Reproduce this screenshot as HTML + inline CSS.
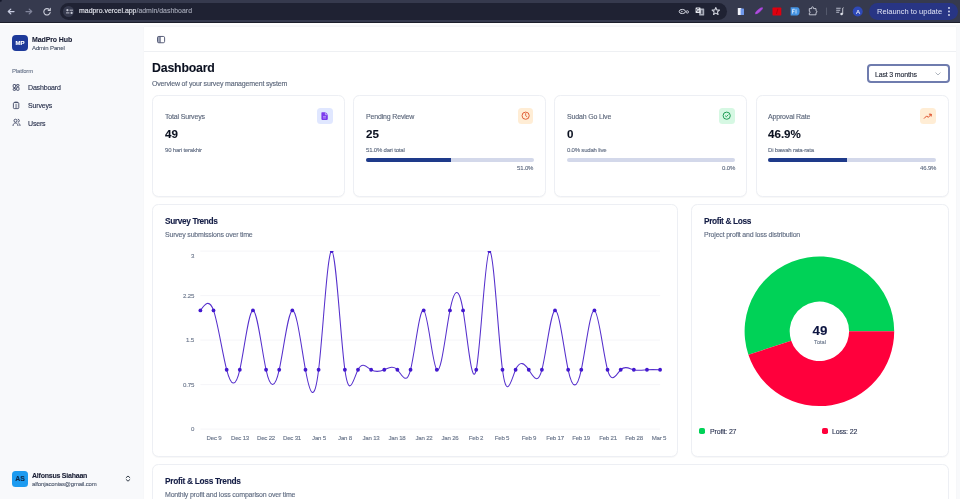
<!DOCTYPE html>
<html><head><meta charset="utf-8"><style>
html,body{margin:0;padding:0;width:960px;height:499px;overflow:hidden;background:#fff;}
body{position:relative;font-family:"Liberation Sans",sans-serif;}
.t{position:absolute;line-height:1;white-space:nowrap;will-change:transform;}
</style></head><body>
<div style="position:absolute;left:0px;top:0px;width:960px;height:23px;background:#363a4e;"></div>
<div style="position:absolute;left:0px;top:0px;width:3px;height:3px;background:radial-gradient(circle at 0 0,#15182a 0,#15182a 1.2px,rgba(21,24,42,0) 2.6px);"></div>
<div style="position:absolute;left:0px;top:22px;width:960px;height:1px;background:#1c1e2b;"></div>
<div style="position:absolute;left:60px;top:3px;width:667px;height:17px;background:#1f2233;border-radius:9px;"></div>
<svg style="position:absolute;left:0;top:0" width="60" height="23" viewBox="0 0 60 23">
<g fill="none" stroke-linecap="round" stroke-linejoin="round" stroke-width="1.1">
<path d="M14 11.5H8.4M10.8 9.1L8.3 11.5L10.8 13.9" stroke="#c8cce0" stroke-width="1.25"/>
<path d="M26 11.5H31.6M29.2 9.1L31.7 11.5L29.2 13.9" stroke="#80849a" stroke-width="1.25"/>
<path d="M50.2 12.2a3.2 3.2 0 1 1-0.9-2.6" stroke="#c9ccd8"/>
<path d="M50.3 8.4v2.1h-2.1" stroke="#c9ccd8"/>
</g></svg>
<div style="position:absolute;left:63.2px;top:5.9px;width:11.2px;height:11.2px;background:#363a4e;border-radius:50%;"></div>
<svg style="position:absolute;left:63px;top:5px" width="13" height="13" viewBox="0 0 13 13">
<g stroke="#c9ccd8" stroke-width="0.9" fill="none" stroke-linecap="round">
<path d="M7 5.2h2.6M3.4 7.9h2.6"/></g><g fill="#c9ccd8"><circle cx="4.4" cy="5.2" r="1.1"/><circle cx="8.6" cy="7.9" r="1.1"/></g></svg>
<div class="t" style="left:79.00px;top:8.42px;font-size:6.95px;color:#e4e6ee;font-weight:400;-webkit-text-stroke:0.12px #e4e6ee;">madpro.vercel.app<span style="color:#a3a7b6;-webkit-text-stroke:0.12px #a3a7b6">/admin/dashboard</span></div>
<svg style="position:absolute;left:676px;top:4px" width="50" height="15" viewBox="0 0 50 15">
<g stroke="#d2d5df" fill="none">
<ellipse cx="6.3" cy="7.5" rx="3.1" ry="2.1" stroke-width="1"/><circle cx="5.9" cy="7.5" r=".7" fill="#d2d5df" stroke="none"/><circle cx="11.3" cy="7.9" r="1.2" stroke-width=".9"/>
</g>
<rect x="23.2" y="4.6" width="5" height="6.9" rx=".5" fill="#a7abb8"/><rect x="25.4" y="6.2" width="1" height="3.8" fill="#1f2233"/>
<rect x="19.6" y="3.4" width="4.9" height="5.6" rx=".5" fill="#e6e8ef"/><path d="M23 4.8a1.5 1.5 0 1 0 .2 2.1h-1.2" stroke="#1f2233" stroke-width=".6" fill="none"/>
<path d="M39.80,3.45 L40.83,5.93 L43.51,6.14 L41.46,7.89 L42.09,10.51 L39.80,9.10 L37.51,10.51 L38.14,7.89 L36.09,6.14 L38.77,5.93Z" stroke="#d2d5df" stroke-width="1.05" fill="none" stroke-linejoin="round"/>
</svg>
<svg style="position:absolute;left:730px;top:3px" width="230" height="18" viewBox="0 0 230 18">
<rect x="7.8" y="4.9" width="3.6" height="7.2" rx=".6" fill="#f2f4fb"/><rect x="10.6" y="5.6" width="3.4" height="6.5" rx=".4" fill="#6f98ec"/>
<ellipse cx="29" cy="7.75" rx="4.9" ry="1.5" transform="rotate(-40 29 7.75)" fill="#a43fd6"/><path d="M26 10.2l5.8-4.9" stroke="#d9a8f0" stroke-width=".5" stroke-dasharray=".8 .7"/>
<rect x="42.5" y="4.6" width="8.8" height="7.8" rx=".6" fill="#e0000f"/><path d="M46.4 11l1.5-5.2" stroke="#a0000a" stroke-width=".7"/>
<path d="M60.6 4.3h6.6a2.4 4 0 0 1 0 8.1h-6.6z" fill="#4493e3"/><path d="M62.6 6.3h2.2M62.6 6.3v4.3M62.6 8.3h1.8M66 6.3v4.3" stroke="#e9f3ff" stroke-width=".8"/>
<path d="M79.3 5.6h2.3v-.9a.9.9 0 0 1 1.8 0v.9h2.6v2.2a.9.9 0 0 1 0 1.8v2.2h-6.7v-1.7a.9.9 0 0 0 0-1.8z" stroke="#cdd0dc" stroke-width=".9" fill="none" stroke-linejoin="round"/>
<rect x="96" y="4.6" width=".6" height="7.5" fill="#6a6e80"/>
<path d="M106.2 5.3h4.5M106.2 7.3h4M106.2 9.3h3" stroke="#b8bccb" stroke-width="1.1"/><circle cx="111.6" cy="11" r="1.3" fill="#dfe2ea"/><path d="M112.7 11V5.2l.9-.5" stroke="#dfe2ea" stroke-width=".8" fill="none"/>
<circle cx="127.7" cy="8.5" r="5" fill="#2e49b8"/>
</svg>
<div class="t" style="left:857.80px;transform:translateX(-50%);transform-origin:50% 0;top:8.85px;font-size:6.2px;color:#e6e9f5;font-weight:400;-webkit-text-stroke:0.12px #e6e9f5;">A</div>
<div style="position:absolute;left:869px;top:3px;width:89px;height:17px;background:#283584;border-radius:9px;"></div>
<div class="t" style="left:876.70px;top:7.95px;font-size:7.5px;color:#dfe3f5;font-weight:400;-webkit-text-stroke:0.12px #dfe3f5;-webkit-text-stroke:0;">Relaunch to update</div>
<svg style="position:absolute;left:946px;top:6px" width="6" height="12" viewBox="0 0 6 12"><g fill="#dfe3f5"><circle cx="3" cy="2" r=".9"/><circle cx="3" cy="5.5" r=".9"/><circle cx="3" cy="9" r=".9"/></g></svg>
<div style="position:absolute;left:0px;top:25px;width:960px;height:474px;background:#f8f9fb;"></div>
<div style="position:absolute;left:144px;top:27px;width:812px;height:472px;background:#ffffff;box-shadow:0 0 1px rgba(0,0,0,0.06);"></div>
<div style="position:absolute;left:144px;top:50.5px;width:812px;height:1px;background:#eef0f3;"></div>
<div style="position:absolute;left:12px;top:35.4px;width:16px;height:15.6px;background:#1e3a9a;border-radius:4px;"></div>
<div class="t" style="left:20.00px;transform:translateX(-50%);transform-origin:50% 0;top:39.92px;font-size:6.0px;color:#ffffff;font-weight:700;-webkit-text-stroke:0.1px #ffffff;">MP</div>
<div class="t" style="left:32.10px;top:35.77px;font-size:7.0px;color:#1a1f35;font-weight:700;-webkit-text-stroke:0.1px #1a1f35;letter-spacing:-0.112px;">MadPro Hub</div>
<div class="t" style="left:32.10px;top:44.82px;font-size:6.0px;color:#475266;font-weight:400;-webkit-text-stroke:0.12px #475266;letter-spacing:-0.112px;">Admin Panel</div>
<div class="t" style="left:11.90px;top:68.12px;font-size:6.0px;color:#6b778c;font-weight:400;-webkit-text-stroke:0.12px #6b778c;letter-spacing:-0.168px;">Platform</div>
<svg style="position:absolute;left:11px;top:82px" width="10" height="48" viewBox="0 0 10 48">
<g fill="none" stroke="#353d5c" stroke-width="0.85" stroke-linejoin="round">
<rect x="2.2" y="2.5" width="2.4" height="3" rx=".5"/><rect x="5.6" y="2.5" width="2.4" height="1.8" rx=".5"/>
<rect x="5.6" y="5.3" width="2.4" height="3" rx=".5"/><rect x="2.2" y="6.5" width="2.4" height="1.8" rx=".5"/>
<rect x="2.4" y="20.6" width="5.4" height="6" rx=".9"/><path d="M3.6 20.6v-.5h3v.5M4.2 23h2M4.2 25h2"/>
<circle cx="4.5" cy="38.7" r="1.5"/><path d="M2 44c0-2 1.2-3 2.5-3s2.5 1 2.5 3M6.8 37.2a1.5 1.5 0 0 1 0 3M7.6 41.2c.9.3 1.4 1.2 1.4 2.8"/>
</g></svg>
<div class="t" style="left:28.00px;top:84.37px;font-size:7.0px;color:#262e4a;font-weight:400;-webkit-text-stroke:0.12px #262e4a;letter-spacing:-0.168px;">Dashboard</div>
<div class="t" style="left:28.00px;top:102.17px;font-size:7.0px;color:#262e4a;font-weight:400;-webkit-text-stroke:0.12px #262e4a;letter-spacing:-0.168px;">Surveys</div>
<div class="t" style="left:28.00px;top:120.37px;font-size:7.0px;color:#262e4a;font-weight:400;-webkit-text-stroke:0.12px #262e4a;letter-spacing:-0.168px;">Users</div>
<div style="position:absolute;left:11.8px;top:471.3px;width:16px;height:16px;background:#1d9bf0;border-radius:3.5px;"></div>
<div class="t" style="left:20.00px;transform:translateX(-50%);transform-origin:50% 0;top:475.76px;font-size:6.9px;color:#0f2a4a;font-weight:700;-webkit-text-stroke:0.1px #0f2a4a;">AS</div>
<div class="t" style="left:32.40px;top:471.77px;font-size:7.0px;color:#1a1f35;font-weight:700;-webkit-text-stroke:0.1px #1a1f35;letter-spacing:-0.224px;">Alfonsus Siahaan</div>
<div class="t" style="left:32.40px;top:480.92px;font-size:6.0px;color:#4f5a6e;font-weight:400;-webkit-text-stroke:0.12px #4f5a6e;letter-spacing:-0.168px;">alfonjaconias@gmail.com</div>
<svg style="position:absolute;left:124px;top:474px" width="8" height="9" viewBox="0 0 8 9"><path d="M2.2 3.6l1.8-1.6 1.8 1.6M2.2 5.6l1.8 1.6 1.8-1.6" fill="none" stroke="#1f2937" stroke-width=".9" stroke-linecap="round" stroke-linejoin="round"/></svg>
<svg style="position:absolute;left:156px;top:35px" width="10" height="9" viewBox="0 0 10 9"><rect x="1.6" y="1.5" width="2.6" height="6" fill="#a3a8bb"/><rect x="1.5" y="1.45" width="7.1" height="6.3" rx="1.3" fill="none" stroke="#474e6b" stroke-width=".9"/><path d="M4.2 1.45v6.3" stroke="#474e6b" stroke-width=".8"/></svg>
<div class="t" style="left:152.00px;top:61.99px;font-size:12.3px;color:#0b1120;font-weight:700;-webkit-text-stroke:0.1px #0b1120;letter-spacing:-0.17px;">Dashboard</div>
<div class="t" style="left:152.30px;top:80.17px;font-size:7.0px;color:#5a6579;font-weight:400;-webkit-text-stroke:0.12px #5a6579;letter-spacing:-0.168px;">Overview of your survey management system</div>
<div style="position:absolute;left:867.3px;top:63.6px;width:82.3px;height:19.9px;box-sizing:border-box;border:2.2px solid #6f7cae;border-radius:4px;background:#fff;"></div>
<div class="t" style="left:874.90px;top:71.07px;font-size:7.0px;color:#1d2333;font-weight:400;-webkit-text-stroke:0.12px #1d2333;letter-spacing:-0.168px;">Last 3 months</div>
<svg style="position:absolute;left:934px;top:71px" width="8" height="6" viewBox="0 0 8 6"><path d="M1.5 1.5l2.5 2.5 2.5-2.5" fill="none" stroke="#9ca3af" stroke-width=".8"/></svg>
<div style="position:absolute;left:152.2px;top:95.4px;width:193px;height:101.2px;box-sizing:border-box;border:1px solid #edeff4;border-radius:6.5px;background:#fff;box-shadow:0 0.5px 1px rgba(0,0,0,.03);"></div>
<div style="position:absolute;left:353.0px;top:95.4px;width:193px;height:101.2px;box-sizing:border-box;border:1px solid #edeff4;border-radius:6.5px;background:#fff;box-shadow:0 0.5px 1px rgba(0,0,0,.03);"></div>
<div style="position:absolute;left:554.2px;top:95.4px;width:193px;height:101.2px;box-sizing:border-box;border:1px solid #edeff4;border-radius:6.5px;background:#fff;box-shadow:0 0.5px 1px rgba(0,0,0,.03);"></div>
<div style="position:absolute;left:755.5px;top:95.4px;width:193px;height:101.2px;box-sizing:border-box;border:1px solid #edeff4;border-radius:6.5px;background:#fff;box-shadow:0 0.5px 1px rgba(0,0,0,.03);"></div>
<div class="t" style="left:164.90px;top:113.37px;font-size:7.0px;color:#5a6579;font-weight:400;-webkit-text-stroke:0.12px #5a6579;letter-spacing:-0.168px;">Total Surveys</div>
<div class="t" style="left:164.90px;top:127.98px;font-size:11.6px;color:#0b1120;font-weight:700;-webkit-text-stroke:0.1px #0b1120;">49</div>
<div class="t" style="left:164.90px;top:147.02px;font-size:6.0px;color:#5f6b80;font-weight:400;-webkit-text-stroke:0.12px #5f6b80;letter-spacing:-0.196px;">90 hari terakhir</div>
<div style="position:absolute;left:317.0px;top:108.4px;width:15.5px;height:15.4px;background:#e0e7ff;border-radius:3.5px;"></div>
<div class="t" style="left:365.70px;top:113.37px;font-size:7.0px;color:#5a6579;font-weight:400;-webkit-text-stroke:0.12px #5a6579;letter-spacing:-0.168px;">Pending Review</div>
<div class="t" style="left:365.70px;top:127.98px;font-size:11.6px;color:#0b1120;font-weight:700;-webkit-text-stroke:0.1px #0b1120;">25</div>
<div class="t" style="left:365.70px;top:147.02px;font-size:6.0px;color:#5f6b80;font-weight:400;-webkit-text-stroke:0.12px #5f6b80;letter-spacing:-0.196px;">51.0% dari total</div>
<div style="position:absolute;left:517.8px;top:108.4px;width:15.5px;height:15.4px;background:#ffedd5;border-radius:3.5px;"></div>
<div style="position:absolute;left:365.7px;top:158.1px;width:168px;height:4px;background:#d3d8ea;border-radius:2px;overflow:hidden;"></div>
<div style="position:absolute;left:365.7px;top:158.1px;width:85.68px;height:4px;background:#1e3a8a;border-radius:2px 0 0 2px;"></div>
<div class="t" style="right:426.30px;top:165.32px;font-size:6.0px;color:#5f6b80;font-weight:400;-webkit-text-stroke:0.12px #5f6b80;letter-spacing:-0.140px;">51.0%</div>
<div class="t" style="left:566.90px;top:113.37px;font-size:7.0px;color:#5a6579;font-weight:400;-webkit-text-stroke:0.12px #5a6579;letter-spacing:-0.168px;">Sudah Go Live</div>
<div class="t" style="left:566.90px;top:127.98px;font-size:11.6px;color:#0b1120;font-weight:700;-webkit-text-stroke:0.1px #0b1120;">0</div>
<div class="t" style="left:566.90px;top:147.02px;font-size:6.0px;color:#5f6b80;font-weight:400;-webkit-text-stroke:0.12px #5f6b80;letter-spacing:-0.196px;">0.0% sudah live</div>
<div style="position:absolute;left:719.0px;top:108.4px;width:15.5px;height:15.4px;background:#d6f8e3;border-radius:3.5px;"></div>
<div style="position:absolute;left:566.9000000000001px;top:158.1px;width:168px;height:4px;background:#d3d8ea;border-radius:2px;overflow:hidden;"></div>
<div class="t" style="right:225.10px;top:165.32px;font-size:6.0px;color:#5f6b80;font-weight:400;-webkit-text-stroke:0.12px #5f6b80;letter-spacing:-0.140px;">0.0%</div>
<div class="t" style="left:768.20px;top:113.37px;font-size:7.0px;color:#5a6579;font-weight:400;-webkit-text-stroke:0.12px #5a6579;letter-spacing:-0.168px;">Approval Rate</div>
<div class="t" style="left:768.20px;top:127.98px;font-size:11.6px;color:#0b1120;font-weight:700;-webkit-text-stroke:0.1px #0b1120;">46.9%</div>
<div class="t" style="left:768.20px;top:147.02px;font-size:6.0px;color:#5f6b80;font-weight:400;-webkit-text-stroke:0.12px #5f6b80;letter-spacing:-0.196px;">Di bawah rata-rata</div>
<div style="position:absolute;left:920.3px;top:108.4px;width:15.5px;height:15.4px;background:#ffedd5;border-radius:3.5px;"></div>
<div style="position:absolute;left:768.2px;top:158.1px;width:168px;height:4px;background:#d3d8ea;border-radius:2px;overflow:hidden;"></div>
<div style="position:absolute;left:768.2px;top:158.1px;width:78.792px;height:4px;background:#1e3a8a;border-radius:2px 0 0 2px;"></div>
<div class="t" style="right:23.80px;top:165.32px;font-size:6.0px;color:#5f6b80;font-weight:400;-webkit-text-stroke:0.12px #5f6b80;letter-spacing:-0.140px;">46.9%</div>
<svg style="position:absolute;left:317.0px;top:108.4px" width="15.5" height="15.4" viewBox="0 0 15.5 15.4">
<path d="M5 4.3h3.6l2.2 2.2v4.6a.8.8 0 0 1-.8.8H5.2a.8.8 0 0 1-.8-.8V5.1a.8.8 0 0 1 .6-.8z" fill="#7c3aed"/>
<path d="M8.4 4.3v2.4h2.4" fill="none" stroke="#e0e7ff" stroke-width=".6"/><path d="M6 8.6h3M6 10h3" stroke="#e0e7ff" stroke-width=".5"/></svg>
<svg style="position:absolute;left:517.8px;top:108.4px" width="15.5" height="15.4" viewBox="0 0 15.5 15.4">
<circle cx="7.65" cy="7.7" r="3.6" fill="none" stroke="#e0613a" stroke-width="1"/><path d="M7.65 5.6v2.1l1.3 1" fill="none" stroke="#e0613a" stroke-width=".9" stroke-linecap="round"/></svg>
<svg style="position:absolute;left:719.0px;top:108.4px" width="15.5" height="15.4" viewBox="0 0 15.5 15.4">
<circle cx="7.7" cy="7.7" r="3.6" fill="none" stroke="#1f9d55" stroke-width="1"/><path d="M6.3 7.8l1 1 1.8-1.9" fill="none" stroke="#1f9d55" stroke-width=".9" stroke-linecap="round" stroke-linejoin="round"/></svg>
<svg style="position:absolute;left:920.3px;top:108.4px" width="15.5" height="15.4" viewBox="0 0 15.5 15.4">
<path d="M4.3 10.3l2.4-2.4 1.5 1.5 3-3M9.3 6.2h1.9v1.9" fill="none" stroke="#dc4a26" stroke-width="1" stroke-linecap="round" stroke-linejoin="round"/></svg>
<div style="position:absolute;left:152.2px;top:204.2px;width:526.2px;height:252.4px;box-sizing:border-box;border:1px solid #edeff4;border-radius:6.5px;background:#fff;box-shadow:0 0.5px 1px rgba(0,0,0,.03);"></div>
<div style="position:absolute;left:690.8px;top:204.2px;width:257.8px;height:252.4px;box-sizing:border-box;border:1px solid #edeff4;border-radius:6.5px;background:#fff;box-shadow:0 0.5px 1px rgba(0,0,0,.03);"></div>
<div style="position:absolute;left:152.2px;top:464.2px;width:796.4px;height:60px;box-sizing:border-box;border:1px solid #edeff4;border-radius:6.5px;background:#fff;box-shadow:0 0.5px 1px rgba(0,0,0,.03);"></div>
<div class="t" style="left:164.80px;top:216.72px;font-size:8.3px;color:#141d45;font-weight:700;-webkit-text-stroke:0.1px #141d45;letter-spacing:-0.364px;">Survey Trends</div>
<div class="t" style="left:164.80px;top:230.82px;font-size:7.0px;color:#5f6b80;font-weight:400;-webkit-text-stroke:0.12px #5f6b80;letter-spacing:-0.196px;">Survey submissions over time</div>
<svg style="position:absolute;left:0;top:0" width="960" height="499" viewBox="0 0 960 499"><defs><clipPath id="cp"><rect x="190" y="251.11" width="480" height="200"/></clipPath></defs><line x1="200.4" x2="660.1" y1="429.10" y2="429.10" stroke="#f2f3f6" stroke-width="0.8"/><line x1="200.4" x2="660.1" y1="384.60" y2="384.60" stroke="#f2f3f6" stroke-width="0.8"/><line x1="200.4" x2="660.1" y1="340.11" y2="340.11" stroke="#f2f3f6" stroke-width="0.8"/><line x1="200.4" x2="660.1" y1="295.61" y2="295.61" stroke="#f2f3f6" stroke-width="0.8"/><line x1="200.4" x2="660.1" y1="251.11" y2="251.11" stroke="#f2f3f6" stroke-width="0.8"/><g clip-path="url(#cp)"><path d="M200.40,310.44C204.78,304.32,209.16,298.20,213.53,310.44C217.91,322.68,222.29,353.27,226.67,369.77C231.05,386.27,235.42,388.67,239.80,369.77C244.18,350.87,248.56,310.65,252.94,310.44C257.32,310.23,261.69,350.01,266.07,369.77C270.45,389.53,274.83,389.25,279.21,369.77C283.58,350.29,287.96,311.60,292.34,310.44C296.72,309.28,301.10,345.65,305.47,369.77C309.85,393.89,314.23,405.74,318.61,369.77C322.99,333.80,327.36,250.00,331.74,251.11C336.12,252.22,340.50,338.25,344.88,369.77C349.26,401.29,353.63,378.30,358.01,369.77C362.39,361.24,366.77,367.19,371.15,369.77C375.52,372.35,379.90,371.57,384.28,369.77C388.66,367.97,393.04,365.14,397.41,369.77C401.79,374.40,406.17,386.50,410.55,369.77C414.93,353.04,419.30,307.47,423.68,310.44C428.06,313.41,432.44,364.90,436.82,369.77C441.20,374.64,445.57,332.88,449.95,310.44C454.33,288.00,458.71,284.89,463.09,310.44C467.46,335.99,471.84,390.21,476.22,369.77C480.60,349.33,484.98,254.23,489.35,251.11C493.73,247.99,498.11,336.86,502.49,369.77C506.87,402.68,511.24,379.63,515.62,369.77C520.00,359.91,524.38,363.25,528.76,369.77C533.14,376.29,537.51,385.99,541.89,369.77C546.27,353.55,550.65,311.41,555.03,310.44C559.40,309.47,563.78,349.66,568.16,369.77C572.54,389.88,576.92,389.92,581.29,369.77C585.67,349.62,590.05,309.30,594.43,310.44C598.81,311.58,603.18,354.18,607.56,369.77C611.94,385.36,616.32,373.95,620.70,369.77C625.08,365.59,629.45,368.64,633.83,369.77C638.21,370.90,642.59,370.09,646.97,369.77C651.34,369.45,655.72,369.61,660.10,369.77" fill="none" stroke="#5630cc" stroke-width="1.05"/><circle cx="200.40" cy="310.44" r="1.9" fill="#4318cf"/><circle cx="213.53" cy="310.44" r="1.9" fill="#4318cf"/><circle cx="226.67" cy="369.77" r="1.9" fill="#4318cf"/><circle cx="239.80" cy="369.77" r="1.9" fill="#4318cf"/><circle cx="252.94" cy="310.44" r="1.9" fill="#4318cf"/><circle cx="266.07" cy="369.77" r="1.9" fill="#4318cf"/><circle cx="279.21" cy="369.77" r="1.9" fill="#4318cf"/><circle cx="292.34" cy="310.44" r="1.9" fill="#4318cf"/><circle cx="305.47" cy="369.77" r="1.9" fill="#4318cf"/><circle cx="318.61" cy="369.77" r="1.9" fill="#4318cf"/><circle cx="331.74" cy="251.11" r="1.9" fill="#4318cf"/><circle cx="344.88" cy="369.77" r="1.9" fill="#4318cf"/><circle cx="358.01" cy="369.77" r="1.9" fill="#4318cf"/><circle cx="371.15" cy="369.77" r="1.9" fill="#4318cf"/><circle cx="384.28" cy="369.77" r="1.9" fill="#4318cf"/><circle cx="397.41" cy="369.77" r="1.9" fill="#4318cf"/><circle cx="410.55" cy="369.77" r="1.9" fill="#4318cf"/><circle cx="423.68" cy="310.44" r="1.9" fill="#4318cf"/><circle cx="436.82" cy="369.77" r="1.9" fill="#4318cf"/><circle cx="449.95" cy="310.44" r="1.9" fill="#4318cf"/><circle cx="463.09" cy="310.44" r="1.9" fill="#4318cf"/><circle cx="476.22" cy="369.77" r="1.9" fill="#4318cf"/><circle cx="489.35" cy="251.11" r="1.9" fill="#4318cf"/><circle cx="502.49" cy="369.77" r="1.9" fill="#4318cf"/><circle cx="515.62" cy="369.77" r="1.9" fill="#4318cf"/><circle cx="528.76" cy="369.77" r="1.9" fill="#4318cf"/><circle cx="541.89" cy="369.77" r="1.9" fill="#4318cf"/><circle cx="555.03" cy="310.44" r="1.9" fill="#4318cf"/><circle cx="568.16" cy="369.77" r="1.9" fill="#4318cf"/><circle cx="581.29" cy="369.77" r="1.9" fill="#4318cf"/><circle cx="594.43" cy="310.44" r="1.9" fill="#4318cf"/><circle cx="607.56" cy="369.77" r="1.9" fill="#4318cf"/><circle cx="620.70" cy="369.77" r="1.9" fill="#4318cf"/><circle cx="633.83" cy="369.77" r="1.9" fill="#4318cf"/><circle cx="646.97" cy="369.77" r="1.9" fill="#4318cf"/><circle cx="660.10" cy="369.77" r="1.9" fill="#4318cf"/></g></svg>
<div class="t" style="right:765.60px;top:426.24px;font-size:6.1px;color:#6b778c;font-weight:400;-webkit-text-stroke:0.12px #6b778c;letter-spacing:-0.168px;">0</div>
<div class="t" style="right:765.60px;top:381.74px;font-size:6.1px;color:#6b778c;font-weight:400;-webkit-text-stroke:0.12px #6b778c;letter-spacing:-0.168px;">0.75</div>
<div class="t" style="right:765.60px;top:337.24px;font-size:6.1px;color:#6b778c;font-weight:400;-webkit-text-stroke:0.12px #6b778c;letter-spacing:-0.168px;">1.5</div>
<div class="t" style="right:765.60px;top:292.74px;font-size:6.1px;color:#6b778c;font-weight:400;-webkit-text-stroke:0.12px #6b778c;letter-spacing:-0.168px;">2.25</div>
<div class="t" style="right:765.60px;top:253.45px;font-size:6.1px;color:#6b778c;font-weight:400;-webkit-text-stroke:0.12px #6b778c;letter-spacing:-0.168px;">3</div>
<div class="t" style="left:213.53px;transform:translateX(-50%);transform-origin:50% 0;top:435.34px;font-size:6.1px;color:#687489;font-weight:400;-webkit-text-stroke:0.12px #687489;letter-spacing:-0.224px;">Dec 9</div>
<div class="t" style="left:239.80px;transform:translateX(-50%);transform-origin:50% 0;top:435.34px;font-size:6.1px;color:#687489;font-weight:400;-webkit-text-stroke:0.12px #687489;letter-spacing:-0.224px;">Dec 13</div>
<div class="t" style="left:266.07px;transform:translateX(-50%);transform-origin:50% 0;top:435.34px;font-size:6.1px;color:#687489;font-weight:400;-webkit-text-stroke:0.12px #687489;letter-spacing:-0.224px;">Dec 22</div>
<div class="t" style="left:292.34px;transform:translateX(-50%);transform-origin:50% 0;top:435.34px;font-size:6.1px;color:#687489;font-weight:400;-webkit-text-stroke:0.12px #687489;letter-spacing:-0.224px;">Dec 31</div>
<div class="t" style="left:318.61px;transform:translateX(-50%);transform-origin:50% 0;top:435.34px;font-size:6.1px;color:#687489;font-weight:400;-webkit-text-stroke:0.12px #687489;letter-spacing:-0.224px;">Jan 5</div>
<div class="t" style="left:344.88px;transform:translateX(-50%);transform-origin:50% 0;top:435.34px;font-size:6.1px;color:#687489;font-weight:400;-webkit-text-stroke:0.12px #687489;letter-spacing:-0.224px;">Jan 8</div>
<div class="t" style="left:371.15px;transform:translateX(-50%);transform-origin:50% 0;top:435.34px;font-size:6.1px;color:#687489;font-weight:400;-webkit-text-stroke:0.12px #687489;letter-spacing:-0.224px;">Jan 13</div>
<div class="t" style="left:397.41px;transform:translateX(-50%);transform-origin:50% 0;top:435.34px;font-size:6.1px;color:#687489;font-weight:400;-webkit-text-stroke:0.12px #687489;letter-spacing:-0.224px;">Jan 18</div>
<div class="t" style="left:423.68px;transform:translateX(-50%);transform-origin:50% 0;top:435.34px;font-size:6.1px;color:#687489;font-weight:400;-webkit-text-stroke:0.12px #687489;letter-spacing:-0.224px;">Jan 22</div>
<div class="t" style="left:449.95px;transform:translateX(-50%);transform-origin:50% 0;top:435.34px;font-size:6.1px;color:#687489;font-weight:400;-webkit-text-stroke:0.12px #687489;letter-spacing:-0.224px;">Jan 26</div>
<div class="t" style="left:476.22px;transform:translateX(-50%);transform-origin:50% 0;top:435.34px;font-size:6.1px;color:#687489;font-weight:400;-webkit-text-stroke:0.12px #687489;letter-spacing:-0.224px;">Feb 2</div>
<div class="t" style="left:502.49px;transform:translateX(-50%);transform-origin:50% 0;top:435.34px;font-size:6.1px;color:#687489;font-weight:400;-webkit-text-stroke:0.12px #687489;letter-spacing:-0.224px;">Feb 5</div>
<div class="t" style="left:528.76px;transform:translateX(-50%);transform-origin:50% 0;top:435.34px;font-size:6.1px;color:#687489;font-weight:400;-webkit-text-stroke:0.12px #687489;letter-spacing:-0.224px;">Feb 9</div>
<div class="t" style="left:555.03px;transform:translateX(-50%);transform-origin:50% 0;top:435.34px;font-size:6.1px;color:#687489;font-weight:400;-webkit-text-stroke:0.12px #687489;letter-spacing:-0.224px;">Feb 17</div>
<div class="t" style="left:581.29px;transform:translateX(-50%);transform-origin:50% 0;top:435.34px;font-size:6.1px;color:#687489;font-weight:400;-webkit-text-stroke:0.12px #687489;letter-spacing:-0.224px;">Feb 19</div>
<div class="t" style="left:607.56px;transform:translateX(-50%);transform-origin:50% 0;top:435.34px;font-size:6.1px;color:#687489;font-weight:400;-webkit-text-stroke:0.12px #687489;letter-spacing:-0.224px;">Feb 21</div>
<div class="t" style="left:633.83px;transform:translateX(-50%);transform-origin:50% 0;top:435.34px;font-size:6.1px;color:#687489;font-weight:400;-webkit-text-stroke:0.12px #687489;letter-spacing:-0.224px;">Feb 28</div>
<div class="t" style="left:659.30px;transform:translateX(-50%);transform-origin:50% 0;top:435.34px;font-size:6.1px;color:#687489;font-weight:400;-webkit-text-stroke:0.12px #687489;letter-spacing:-0.224px;">Mar 5</div>
<div class="t" style="left:703.70px;top:216.72px;font-size:8.3px;color:#141d45;font-weight:700;-webkit-text-stroke:0.1px #141d45;letter-spacing:-0.364px;">Profit &amp; Loss</div>
<div class="t" style="left:703.70px;top:230.82px;font-size:7.0px;color:#5f6b80;font-weight:400;-webkit-text-stroke:0.12px #5f6b80;letter-spacing:-0.196px;">Project profit and loss distribution</div>
<svg style="position:absolute;left:0;top:0" width="960" height="499" viewBox="0 0 960 499"><path d="M894.20,331.30A74.8,74.8 0 1 0 748.41,354.87L791.21,340.66A29.7,29.7 0 1 1 849.10,331.30Z" fill="#00d257" stroke="none"/><path d="M748.41,354.87A74.8,74.8 0 0 0 894.20,331.30L849.10,331.30A29.7,29.7 0 0 1 791.21,340.66Z" fill="#ff003c" stroke="none"/></svg>
<div class="t" style="left:819.50px;transform:translateX(-50%);transform-origin:50% 0;top:324.14px;font-size:13.3px;color:#0c1440;font-weight:700;-webkit-text-stroke:0.1px #0c1440;">49</div>
<div class="t" style="left:819.60px;transform:translateX(-50%);transform-origin:50% 0;top:340.26px;font-size:5.6px;color:#6b778c;font-weight:400;-webkit-text-stroke:0.12px #6b778c;">Total</div>
<div style="position:absolute;left:699.1px;top:428.0px;width:6.2px;height:6.2px;background:#00d257;border-radius:1.8px;"></div>
<div class="t" style="left:709.50px;top:428.07px;font-size:7.0px;color:#2a3350;font-weight:400;-webkit-text-stroke:0.12px #2a3350;letter-spacing:-0.168px;">Profit: 27</div>
<div style="position:absolute;left:821.9px;top:428.0px;width:6.2px;height:6.2px;background:#ff003c;border-radius:1.8px;"></div>
<div class="t" style="left:832.20px;top:428.07px;font-size:7.0px;color:#2a3350;font-weight:400;-webkit-text-stroke:0.12px #2a3350;letter-spacing:-0.168px;">Loss: 22</div>
<div class="t" style="left:164.80px;top:476.87px;font-size:8.3px;color:#141d45;font-weight:700;-webkit-text-stroke:0.1px #141d45;letter-spacing:-0.280px;">Profit &amp; Loss Trends</div>
<div class="t" style="left:164.80px;top:490.77px;font-size:7.0px;color:#5f6b80;font-weight:400;-webkit-text-stroke:0.12px #5f6b80;letter-spacing:-0.196px;">Monthly profit and loss comparison over time</div>
</body></html>
